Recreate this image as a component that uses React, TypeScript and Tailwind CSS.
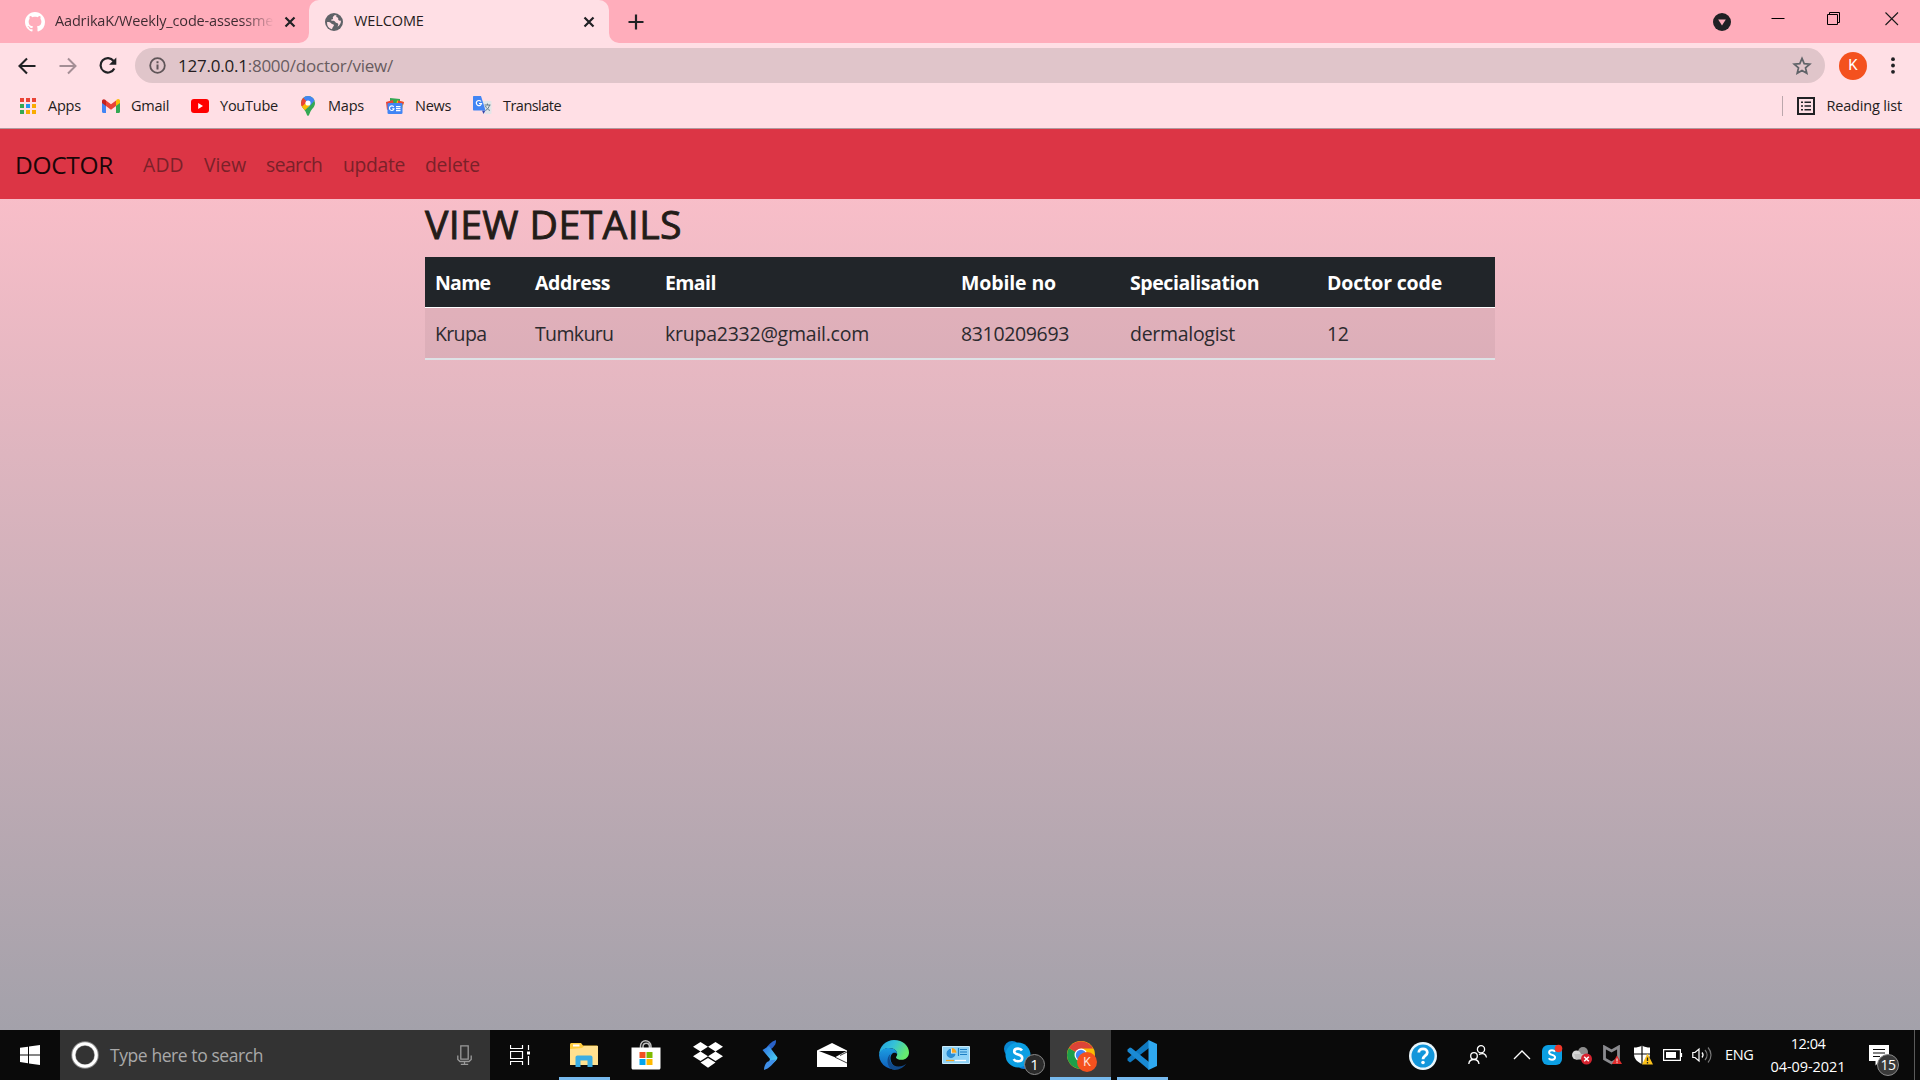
import type { ReactNode } from "react";

type IconProps = { w: number; h: number; className?: string; children: ReactNode };

function Icon({ w, h, className = "", children }: IconProps) {
  return (
    <svg width={w} height={h} viewBox={`0 0 ${w} ${h}`} fill="none" className={`block shrink-0 ${className}`}>
      {children}
    </svg>
  );
}

const CloseX = () => (
  <Icon w={12} h={12}>
    <path d="M1.5 1.5l9 9M10.5 1.5l-9 9" stroke="#202124" strokeWidth="2.2" />
  </Icon>
);

function TabStrip() {
  return (
    <div className="flex h-[43px] bg-[#ffadbb]">
      <div className="flex w-[309px] items-center pl-[25px]">
        <svg width="20" height="20" viewBox="0 0 16 16" fill="#fff" className="shrink-0">
          <path d="M8 0C3.58 0 0 3.58 0 8c0 3.54 2.29 6.53 5.47 7.59.4.07.55-.17.55-.38 0-.19-.01-.82-.01-1.49-2.01.37-2.53-.49-2.69-.94-.09-.23-.48-.94-.82-1.13-.28-.15-.68-.52-.01-.53.63-.01 1.08.58 1.23.82.72 1.21 1.87.87 2.33.66.07-.52.28-.87.51-1.07-1.78-.2-3.64-.89-3.64-3.95 0-.87.31-1.59.82-2.15-.08-.2-.36-1.02.08-2.12 0 0 .67-.21 2.2.82.64-.18 1.32-.27 2-.27s1.36.09 2 .27c1.53-1.04 2.2-.82 2.2-.82.44 1.1.16 1.92.08 2.12.51.56.82 1.27.82 2.15 0 3.07-1.87 3.75-3.65 3.95.29.25.54.73.54 1.48 0 1.07-.01 1.93-.01 2.2 0 .21.15.46.55.38A8.01 8.01 0 0 0 16 8c0-4.42-3.58-8-8-8z" />
        </svg>
        <div className="-mt-[2px] ml-[10px] w-[219px] overflow-hidden bg-gradient-to-r from-[#3c2a30] from-85% to-[#ffadbb] bg-clip-text text-[14.5px] tracking-[-0.16px] whitespace-nowrap text-transparent">
          AadrikaK/Weekly_code-assessme
        </div>
        <div className="ml-[10px]"><CloseX /></div>
      </div>
      <div className="relative flex w-[300px] items-center rounded-t-[10px] bg-[#ffdfe5] pl-4">
        <svg width="10" height="10" viewBox="0 0 10 10" className="absolute bottom-0 -left-[10px]">
          <path d="M10 0v10H0A10 10 0 0 0 10 0z" fill="#ffdfe5" />
        </svg>
        <svg width="10" height="10" viewBox="0 0 10 10" className="absolute -right-[10px] bottom-0">
          <path d="M0 0v10h10A10 10 0 0 1 0 0z" fill="#ffdfe5" />
        </svg>
        <Icon w={18} h={18}>
          <circle cx="9" cy="9" r="9" fill="#5f6368" />
          <path d="M2 9.2c1.6-.3 3.2.2 4.3 1.2.9.8 2.4.4 2.6 1.6.2 1.2-1 1.6-1.3 2.6-.2.7-.4 1.2-.8 1.6A7.2 7.2 0 0 1 2 9.2zM9.8 1.9c-.4 1-1.5 1.2-1.9 2-.4.9.5 1.3 0 2-.4.6-1.5.2-1.7 1-.1.7.9.8 1.8.8 1.4 0 2 .7 2.5 1.6.6 1 2 .5 2.6 1.5.4.7-.1 1.7-.5 2.9A7.3 7.3 0 0 0 16 7.5c-1 .6-2 .4-2.6-.4-.5-.8.2-1.6-.5-2.3-.5-.5-1.3-.4-1.6-1-.2-.5.1-1 .3-1.4z" fill="#ffdfe5" />
        </Icon>
        <span className="-mt-[2px] ml-[11px] text-[14.5px] tracking-[-0.1px] text-[#241c20]">WELCOME</span>
        <div className="mr-[14px] ml-auto"><CloseX /></div>
      </div>
      <div className="flex items-center pl-[19px]">
        <Icon w={16} h={16}><path d="M8 .5v15M.5 8h15" stroke="#202124" strokeWidth="2.2" /></Icon>
      </div>
      <div className="ml-auto flex pt-[12px] pr-[21px]">
        <Icon w={18} h={18} className="mt-[1px]">
          <circle cx="9" cy="9" r="9" fill="#202124" />
          <path d="M5.2 6.5h7.6L9 12.4z" fill="#ffadbb" />
        </Icon>
        <Icon w={14} h={14} className="ml-10"><path d="M.5 6.5h13" stroke="#000" /></Icon>
        <Icon w={14} h={14} className="ml-[42px]"><path d="M.5 2.5h10v10H.5zM2.500 2.500v-2h10v10h-2" stroke="#000" /></Icon>
        <Icon w={14} h={14} className="ml-11"><path d="M.5.5l12.500 12.500M13 .5L.5 13" stroke="#1a1a1a" strokeWidth="1.1" /></Icon>
      </div>
    </div>
  );
}

function Toolbar() {
  return (
    <div className="flex h-[45px] items-center pl-[18px]">
      <Icon w={18} h={18}><path d="M17.5 9H2M9 1.5L1.5 9 9 16.5" stroke="#202124" strokeWidth="2.1" /></Icon>
      <Icon w={18} h={18} className="ml-[23px]"><path d="M.5 9H16M9 1.5L16.500 9 9 16.500" stroke="#a48e95" strokeWidth="2" /></Icon>
      <Icon w={18} h={18} className="ml-[22px]">
        <path d="M15.300 11.500A7.200 7.200 0 1 1 14.600 4" stroke="#202124" strokeWidth="2.2" />
        <path d="M17.3.5v7.200h-7.200z" fill="#202124" />
      </Icon>
      <div className="ml-[18px] flex h-[35px] w-[1690px] items-center rounded-full bg-[#e0c5ca] pr-[13px] pl-[14px]">
        <Icon w={17} h={17}>
          <circle cx="8.500" cy="8.500" r="7.300" stroke="#5f5558" strokeWidth="1.8" />
          <path d="M8.500 7.500v5M8.500 4.300v2" stroke="#5f5558" strokeWidth="2" />
        </Icon>
        <span className="ml-3 text-[17px] tracking-[-0.23px] text-[#685c60]"><span className="text-[#241c20]">127.0.0.1</span>:8000/doctor/view/</span>
        <svg width="20" height="20" viewBox="0 0 20 20" fill="none" className="ml-auto">
          <path d="M10 2.400l2.200 5.200 5.600.5-4.300 3.700 1.300 5.500L10 14.400l-4.800 2.900 1.300-5.500L2.200 8.100l5.600-.5z" stroke="#5f6368" strokeWidth="1.7" />
        </svg>
      </div>
      <div className="ml-[14px] flex size-7 items-center justify-center rounded-full bg-[#f4511e] font-[Roboto] text-[15px] text-white">K</div>
      <Icon w={4} h={17} className="ml-[24px]">
        <circle cx="2" cy="2.2" r="1.9" fill="#202124" />
        <circle cx="2" cy="8.5" r="1.9" fill="#202124" />
        <circle cx="2" cy="14.8" r="1.9" fill="#202124" />
      </Icon>
    </div>
  );
}

const appDots = ["#ea4335", "#ea4335", "#ea4335", "#34a853", "#2196f3", "#f9ab00", "#34a853", "#f9ab00", "#f9ab00"];

function Bookmarks() {
  return (
    <div className="flex h-[40px] items-center pb-[5px] pl-5 text-[14.5px] tracking-[-0.23px] whitespace-nowrap text-[#241c20]">
      <div className="flex w-[82px] items-center gap-3">
        <Icon w={16} h={16}>
          {appDots.map((c, i) => <rect key={i} x={(i % 3) * 6} y={Math.floor(i / 3) * 6} width="4" height="4" fill={c} />)}
        </Icon>
        <span>Apps</span>
      </div>
      <div className="flex w-[89px] items-center gap-[11px]">
        <Icon w={18} h={14}>
          <path d="M0 2v10.800C0 13.500.5 14 1.200 14H4V6z" fill="#4285f4" />
          <path d="M18 2v10.800c0 .7-.5 1.200-1.200 1.200H14V6z" fill="#34a853" />
          <path d="M14 1.500V7l4-3V2c0-1.800-2-2.500-3.200-1.400z" fill="#fbbc04" />
          <path d="M4 7V1.500l5 3.700 5-3.700V7l-5 3.700z" fill="#ea4335" />
          <path d="M0 2v2l4 3V1.500L3.200.7C2-.4 0 .3 0 2z" fill="#c5221f" />
        </Icon>
        <span>Gmail</span>
      </div>
      <div className="flex w-[110px] items-center gap-[11px]">
        <Icon w={18} h={14}>
          <rect width="18" height="14" rx="3" fill="#f00" />
          <path d="M7.200 4v6l4.800-3z" fill="#fff" />
        </Icon>
        <span>YouTube</span>
      </div>
      <div className="flex w-[85px] items-center gap-[13px]">
        <svg width="14" height="20" viewBox="0 0 14 20" className="shrink-0">
          <defs><clipPath id="pin"><path d="M7 0a7 7 0 0 1 7 7c0 4-3 5.500-4.500 8.500C8.500 17.500 8 20 7 20s-1.500-2.500-2.500-4.500C3 12.500 0 11 0 7a7 7 0 0 1 7-7z" /></clipPath></defs>
          <g clipPath="url(#pin)">
            <path d="M0 0h14v20H0z" fill="#34a853" />
            <path d="M2 0h12v4L7 12 4 5z" fill="#4285f4" />
            <path d="M0 12V8l4-4 5 5.500L3 15z" fill="#fbbc04" />
            <path d="M0 2l2-.5L6 6l-5 4.500-2-1z" fill="#ea4335" />
          </g>
          <circle cx="7" cy="7" r="2.6" fill="#fff" />
        </svg>
        <span>Maps</span>
      </div>
      <div className="flex w-[87px] items-center gap-[11px]">
        <Icon w={18} h={16}>
          <path d="M4 0l10 1v6H4z" fill="#34a853" />
          <path d="M0 4l7-2 1 6-7 4z" fill="#ea4335" />
          <path d="M11 2.500l7 1.500-2 7-6-3z" fill="#fbbc04" />
          <path d="M12 2.500l6 1.500-1 3-5-2z" fill="#ea4335" />
          <rect x="1.500" y="5" width="15" height="11" rx="1.3" fill="#4285f4" />
          <path d="M7.800 9A2.300 2.300 0 1 0 8 10.800H6.200M10 8.600h4.500M10 10.600h4.500M10 12.600h4.500" stroke="#fff" strokeWidth="1.1" />
        </Icon>
        <span>News</span>
      </div>
      <div className="flex items-center gap-[11px]">
        <Icon w={19} h={19}>
          <path d="M8 5h9.500c.6 0 1 .4 1 1v11c0 .6-.4 1-1 1H12z" fill="#e3e5e8" />
          <path d="M11.500 9h6M14.400 7.500V9M16.500 9c-.5 2.500-2 4.500-4 5.500M12.500 10c.8 2 2.200 3.500 4.500 4.500" stroke="#607d8b" />
          <path d="M9 14.500h3.500L10.500 18z" fill="#3949ab" />
          <path d="M1 0h7l4.500 14.500H1c-.6 0-1-.4-1-1V1c0-.6.4-1 1-1z" fill="#4285f4" />
          <path d="M8 5.500A2.600 2.600 0 1 0 8.500 7.500H6" stroke="#fff" strokeWidth="1.2" />
        </Icon>
        <span className="tracking-[-0.53px]">Translate</span>
      </div>
      <div className="ml-auto flex items-center pr-[18px]">
        <div className="h-5 w-px bg-[#bba7ac]" />
        <Icon w={18} h={18} className="ml-[14px]">
          <rect x="1" y="1" width="16" height="16" stroke="#202124" strokeWidth="2" />
          <path d="M4 5.200h2M4 9h2M4 12.800h2M7.500 5.200H14M7.500 9H14M7.500 12.800H14" stroke="#202124" strokeWidth="1.6" />
        </Icon>
        <span className="ml-[11px] tracking-[-0.17px]">Reading list</span>
      </div>
    </div>
  );
}

const navLinks = [
  { label: "ADD", cls: "w-[61px] tracking-[0.2px]" },
  { label: "View", cls: "w-[62px]" },
  { label: "search", cls: "w-[77px] tracking-[-0.55px]" },
  { label: "update", cls: "w-[82px] tracking-[-0.3px]" },
  { label: "delete", cls: "w-[75px] tracking-[-0.2px]" },
];

const columns = [
  { head: "Name", value: "Krupa", headCls: "tracking-[-0.75px]", cls: "tracking-[-0.65px]" },
  { head: "Address", value: "Tumkuru", headCls: "tracking-[-0.42px]", cls: "tracking-[-0.65px]" },
  { head: "Email", value: "krupa2332@gmail.com", headCls: "tracking-[-0.6px]", cls: "tracking-[-0.24px]" },
  { head: "Mobile no", value: "8310209693", headCls: "tracking-[-0.13px]", cls: "tracking-[-0.35px]" },
  { head: "Specialisation", value: "dermalogist", headCls: "tracking-[-0.43px]", cls: "tracking-[-0.29px]" },
  { head: "Doctor code", value: "12", headCls: "tracking-[-0.18px]", cls: "tracking-[-0.4px]" },
];

function Page() {
  return (
    <main className="h-[901px] bg-linear-to-b from-[#ffc0cb] to-[#a3a1aa]">
      <nav className="flex h-[70px] items-center bg-[#dc3545] pt-[2px] pl-[15px]">
        <span className="w-[118px] text-[24.5px] tracking-[-0.3px] text-[#1a0608]">DOCTOR</span>
        <div className="flex">
          {navLinks.map(({ label, cls }) => (
            <a key={label} className={`pl-[10px] text-[19.3px] whitespace-nowrap text-[#7a2129] ${cls}`}>{label}</a>
          ))}
        </div>
      </nav>
      <section className="mx-auto w-[1070px]">
        <h2 className="h-[58px] text-[39.2px] leading-[50px] tracking-[0.42px] text-[#231c18] [-webkit-text-stroke:0.9px_#231c18]">VIEW DETAILS</h2>
        <table className="w-full table-fixed border-separate border-spacing-0 text-left text-[19.5px] whitespace-nowrap text-[#2c2a2e]">
          <colgroup>
            <col className="w-[100px]" /><col className="w-[130px]" /><col className="w-[296px]" />
            <col className="w-[169px]" /><col className="w-[197px]" /><col className="w-[178px]" />
          </colgroup>
          <thead>
            <tr className="bg-[#212529] text-white">
              {columns.map(({ head, headCls }) => (
                <th key={head} className={`h-[51px] border-b border-white px-[10px] pt-[2px] pb-0 font-bold ${headCls}`}>{head}</th>
              ))}
            </tr>
          </thead>
          <tbody>
            <tr className="bg-black/5">
              {columns.map(({ value, cls }) => (
                <td key={value} className={`h-[52px] border-b-2 border-[#dee2e6] px-[10px] pt-[2px] pb-0 ${cls}`}>{value}</td>
              ))}
            </tr>
          </tbody>
        </table>
      </section>
    </main>
  );
}

function TaskCell({ running, children }: { running?: boolean; children: ReactNode }) {
  return (
    <div className="relative flex h-[50px] w-[62px] items-center justify-center">
      {children}
      {running && <div className="absolute right-[5px] bottom-0 left-[6px] h-[3px] bg-[#76b9ed]" />}
    </div>
  );
}

function Taskbar() {
  return (
    <footer className="flex h-[50px] items-center bg-[#0a0a0a] text-white">
      <div className="flex w-[60px] justify-center">
        <Icon w={20} h={20}><path d="M0 2.800L8 1.700V9.400H0zM9 1.500L20 0v9.400H9zM0 10.400h8v7.800l-8-1.100zM9 10.400h11V20L9 18.400z" fill="#fff" /></Icon>
      </div>
      <div className="flex h-[50px] w-[430px] items-center bg-[#333] pl-[11px]">
        <Icon w={28} h={28}><circle cx="14" cy="14" r="11.5" stroke="#8a8a8a" strokeWidth="4.5" /><circle cx="14" cy="14" r="11.3" stroke="#fff" strokeWidth="3" /></Icon>
        <span className="ml-[11px] text-[17.5px] tracking-[-0.42px] text-[#a9a9a9]">Type here to search</span>
        <Icon w={16} h={20} className="mr-[17px] ml-auto">
          <path d="M3.800.8h7.400v13.400H3.800zM.8 10.500v4l2.200 2h9l2.200-2v-4M7.500 16.500V19M3.800 19.300h7.400" stroke="#9a9a9a" strokeWidth="1.3" />
        </Icon>
      </div>
      <div className="flex w-[63px] pl-5">
        <Icon w={22} h={20}>
          <path d="M.5 0v3.500h12V0M.5 6.500h12v7H.5zM.5 20v-3.500h12V20M18.500 0v5M18.500 11v9" stroke="#fff" strokeWidth="1.2" />
          <path d="M17 6.500h3v3h-3z" fill="#fff" />
        </Icon>
      </div>
      <TaskCell running>
        <Icon w={28} h={24}>
          <path d="M0 1.500C0 .7.7 0 1.500 0H11l2 2.500h13.500c.8 0 1.500.5 1.500 1.300V22H0z" fill="#ffcc3d" />
          <path d="M3 1.500h6.500v2H3z" fill="#fff" />
          <path d="M0 6l12-1 2-2h14v19H0z" fill="#ffe08f" />
          <path d="M5.500 14.500c0-1.200.8-2 2-2h13c1.200 0 2 .8 2 2V24h-5v-6.500h-7V24h-5z" fill="#3aade4" />
        </Icon>
      </TaskCell>
      <TaskCell>
        <Icon w={30} h={30} className="-ml-[1px]">
          <path d="M9.500 8V6c0-3 2.300-5.200 5-5.200S20 3 20 6v2M12 8V6.500c0-2 1.300-3.300 3.200-3.300s3.200 1.500 3.200 3.300V8" stroke="#bdbdbd" strokeWidth="1.5" />
          <path d="M.5 7.500h29V28c0 .8-.7 1.500-1.500 1.500H2c-.8 0-1.500-.7-1.500-1.500z" fill="#fff" />
          <path d="M8.500 12h6v6h-6z" fill="#f25022" /><path d="M15.500 12h6v6h-6z" fill="#7fba00" />
          <path d="M8.500 19h6v6h-6z" fill="#00a4ef" /><path d="M15.500 19h6v6h-6z" fill="#ffb900" />
        </Icon>
      </TaskCell>
      <TaskCell>
        <Icon w={30} h={26}><path d="M7.500 0L0 4.700l7.500 4.700L15 4.700zM22.500 0L15 4.700l7.500 4.700L30 4.700zM0 14.200l7.500 4.700 7.500-4.700-7.500-4.800zM22.500 9.400L15 14.200l7.500 4.700 7.500-4.700zM7.500 20.600L15 25.800l7.500-5.200L15 16z" fill="#fff" /></Icon>
      </TaskCell>
      <TaskCell>
        <Icon w={16} h={30}>
          <defs><linearGradient id="bolt" x1="0" y1="0" x2="1" y2="1"><stop stopColor="#2f6fe0" /><stop offset="1" stopColor="#4fe0f5" /></linearGradient></defs>
          <path d="M14 0c.3 3-1 5.500-3.500 8L6 11 3.500 9.500C6 5 9 1.500 14 0z" fill="#2a62c8" />
          <path d="M.5 10L7 6l8.500 11.500c0 2-2.500 4.500-6 6.500L7 22l1-3z" fill="url(#bolt)" />
          <path d="M2 30c0-3 1-6 3-8l4.500-2 4.500-.5C11 24.500 7 28.500 2 30z" fill="#3f8fe8" />
        </Icon>
      </TaskCell>
      <TaskCell>
        <Icon w={30} h={24}>
          <path d="M0 7.500L15 0l15 7.500V24H0z" fill="#fff" />
          <path d="M2 8h27.500L18 14.200z" fill="#0a0a0a" />
          <path d="M18 14.200L30 20M30 9l-7 3.500" stroke="#0a0a0a" strokeWidth=".8" />
        </Icon>
      </TaskCell>
      <TaskCell>
        <Icon w={30} h={30}>
          <defs>
            <linearGradient id="e1" x1="0" y1="0" x2="1" y2=".4"><stop stopColor="#1f9fe0" /><stop offset=".5" stopColor="#35c1d8" /><stop offset="1" stopColor="#66eb6e" /></linearGradient>
            <linearGradient id="e2" x1="0" y1="0" x2="0" y2="1"><stop stopColor="#1b9de2" /><stop offset="1" stopColor="#0f5dba" /></linearGradient>
          </defs>
          <path d="M0 15C.3 6.500 6.800 0 15 0c9 0 15 6 15 12.500 0 4.500-3.400 7.300-7.300 7.300-3.700 0-5.700-1.500-5.700-2.400 0-.7 1.200-1.400 1.200-3.400 0-3-3.300-6-8-6C5.500 8 1.500 11 0 15z" fill="url(#e1)" />
          <path d="M0 15C1 10.500 5 8 10 8c5 0 8.200 3 8.200 6-2-2.500-6.700-1.500-6.700 4.500 0 5 4.500 9.500 9.500 9.500A15 15 0 0 1 0 15z" fill="url(#e2)" />
          <path d="M11.500 14c-3 6 1.500 12.500 8 12.500 4 0 6.500-1.800 8-3A15 15 0 0 1 15.500 30C10 29.500 8.500 24 8.500 21s1-5.500 3-7z" fill="#114a8b" />
        </Icon>
      </TaskCell>
      <TaskCell>
        <Icon w={28} h={18}>
          <path d="M.5.5h27v17H.5z" fill="#8fd3f7" stroke="#c9ebfb" />
          <circle cx="9" cy="7.500" r="4.7" fill="#e8f5fc" /><path d="M9 7.500V2.800a4.700 4.700 0 1 0 4.700 4.700z" fill="#2b8fd6" /><path d="M9.800 6.700V2a4.700 4.700 0 0 1 4.700 4.700z" fill="#f6a623" />
          <path d="M18 3.500h7M18 6h7M18 8.500h7M16.500 2v8" stroke="#1c7fc4" strokeWidth="1.2" />
          <path d="M4 14.500h8" stroke="#f6a623" strokeWidth="1.3" /><path d="M13 14.500h11" stroke="#fff" strokeWidth="1.3" />
        </Icon>
      </TaskCell>
      <TaskCell>
        <Icon w={28} h={28}>
          <circle cx="8" cy="8" r="8" fill="#0a86d0" /><circle cx="20" cy="20" r="8" fill="#0a78d4" /><circle cx="14" cy="14" r="12.5" fill="#0c9fe3" />
          <path d="M18 9.500c-.8-1.300-2.200-1.900-4-1.900-2.300 0-3.800 1.100-3.800 2.900 0 4 8 2.200 8 6.400 0 2-1.700 3.300-4.200 3.300-2 0-3.500-.7-4.400-2.100" stroke="#fff" strokeWidth="2.6" />
        </Icon>
        <div className="absolute top-6 left-[37px] flex size-[21px] items-center justify-center rounded-full border border-[#8a8a8a] bg-[#2b2b2b] text-[15px] leading-none">1</div>
      </TaskCell>
      <div className="relative ml-px flex h-[50px] w-[61px] items-center justify-center border-b-3 border-[#76b9ed] bg-[#3c3c3c] pt-[3px]">
        <Icon w={28} h={28}>
          <circle cx="14" cy="14" r="14" fill="#fbbc04" />
          <path d="M14 14L1.900 7A14 14 0 0 0 14 28l6-10.500z" fill="#1e9e4a" />
          <path d="M14 14L1.900 7A14 14 0 0 1 26.100 7.500H14z" fill="#dc4437" />
          <circle cx="14" cy="14" r="6.5" fill="#fff" /><circle cx="14" cy="14" r="5.2" fill="#4285f4" />
        </Icon>
        <div className="absolute top-[22px] left-[27px] flex size-5 items-center justify-center rounded-full bg-[#f4511e] font-[Roboto] text-[12px] text-[#ffe0d5]">K</div>
      </div>
      <TaskCell running>
        <Icon w={30} h={30}>
          <path d="M22 0v8L4.500 21.500 3 22.500.5 20.500v-2z" fill="#0f79c0" />
          <path d="M.5 9.500L3 7.500l1.500.5L22 22v8L.5 11.500z" fill="#1a8ad4" />
          <path d="M21.500 0L30 4v22l-8.500 4z" fill="#2fa8f0" />
        </Icon>
      </TaskCell>

      <div className="ml-auto flex items-center">
        <Icon w={28} h={28} className="mt-[2px]">
          <circle cx="14" cy="14" r="14" fill="#e9f6fc" /><circle cx="14" cy="14" r="11.5" fill="#1296db" />
          <path d="M9.800 10.500c0-2.300 1.800-3.700 4.200-3.700s4.300 1.400 4.300 3.700c0 3-4.300 3.200-4.300 6.700" stroke="#fff" strokeWidth="2.8" /><circle cx="14" cy="20.500" r="1.8" fill="#fff" />
        </Icon>
        <Icon w={20} h={20} className="ml-[31px]">
          <circle cx="13" cy="4.300" r="3.6" stroke="#fff" strokeWidth="1.3" /><path d="M11 9.500c4-2 7-.5 7.500 3" stroke="#fff" strokeWidth="1.3" />
          <circle cx="6" cy="11" r="3.3" stroke="#fff" strokeWidth="1.3" /><path d="M.8 19c.5-6 9.500-6 10.200 0" stroke="#fff" strokeWidth="1.3" />
        </Icon>
        <Icon w={18} h={10} className="ml-[25px]"><path d="M1 9l8-8 8 8" stroke="#fff" strokeWidth="1.3" /></Icon>
        <Icon w={22} h={22} className="ml-[10px]">
          <rect x="1" y="1" width="20" height="20" rx="6" fill="#0c9fe3" />
          <path d="M14 7.700c-.6-1-1.700-1.400-3-1.400-1.800 0-2.900.8-2.900 2.200 0 3 6 1.700 6 4.800 0 1.500-1.200 2.400-3.100 2.400-1.500 0-2.700-.5-3.300-1.500" stroke="#fff" strokeWidth="1.9" />
          <circle cx="17.500" cy="4.500" r="3.8" fill="#f0382b" />
        </Icon>
        <Icon w={22} h={20} className="ml-2">
          <circle cx="12" cy="7" r="5" fill="#8d8d8d" /><circle cx="5.500" cy="10" r="4.5" fill="#d6d6d6" /><path d="M3 9h15v5.500H5z" fill="#c2c2c2" />
          <circle cx="15.500" cy="14" r="5.5" fill="#d5232f" /><path d="M13.200 11.700l4.600 4.600M17.800 11.700l-4.600 4.600" stroke="#fff" strokeWidth="1.5" />
        </Icon>
        <Icon w={20} h={20} className="ml-[9px]">
          <path d="M2.500 2l7 4 7-4v12l-7 4-7-4z" stroke="#8a8a8e" strokeWidth="2.8" />
          <path d="M15 10.500l5 8.500H10z" fill="#e02b2b" /><path d="M15 13.500v3M15 17.200v1" stroke="#fff" />
        </Icon>
        <Icon w={20} h={20} className="ml-[11px]">
          <path d="M9 .5c2.500 1.500 5 2 8 2V9c0 5-3.500 8-8 10C4.500 17 1 14 1 9V2.500c3 0 5.500-.5 8-2z" fill="#fff" />
          <path d="M9 0v19M1 9h16" stroke="#0a0a0a" strokeWidth="1.2" />
          <path d="M14.500 8.500L20 19.500H9z" fill="#fcc21b" /><path d="M14.500 12.500v3.500M14.500 17v1.500" stroke="#222" strokeWidth="1.3" />
        </Icon>
        <Icon w={20} h={12} className="ml-[10px]"><path d="M.6.6h16.800v10.800H.6zM18.500 4v4" stroke="#fff" strokeWidth="1.2" /><path d="M3 3h10v6H3z" fill="#fff" /></Icon>
        <Icon w={22} h={18} className="ml-[9px]">
          <path d="M.8 6.500H3L7 3v12l-4-3.500H.8z" stroke="#fff" strokeWidth="1.2" /><path d="M10 6.500c1.300 1.500 1.300 3.500 0 5" stroke="#fff" strokeWidth="1.2" />
          <path d="M13 4c2.700 3 2.700 7 0 10M16 1.500c4 4.500 4 10.500 0 15" stroke="#777" strokeWidth="1.2" />
        </Icon>
        <div className="ml-[11px] w-[45px] text-[14.5px] tracking-[-0.4px]">ENG</div>
        <div className="flex w-[76px] flex-col items-center text-[14.5px] leading-[23px]">
          <span className="-mt-[1px] tracking-[-0.5px]">12:04</span>
          <span className="tracking-[-0.07px]">04-09-2021</span>
        </div>
        <div className="relative ml-[23px] w-[45px]">
          <Icon w={20} h={21}>
            <path d="M0 0h20v16h-9l-4.500 4.500V16H0z" fill="#fff" /><path d="M4 4.500h12M4 8h12M4 11.500h7" stroke="#0a0a0a" strokeWidth="1.2" />
          </Icon>
          <div className="absolute top-[9px] left-2 flex size-[22px] items-center justify-center rounded-full border border-[#8a8a8a] bg-[#3a3a3a] text-[14px] leading-none tracking-[-0.5px]">15</div>
        </div>
        <div className="mr-[5px] h-[50px] w-px bg-[#5a5a5a]" />
      </div>
    </footer>
  );
}

export default function App() {
  return (
    <div className="h-[1080px] w-[1920px] overflow-hidden font-['Open_Sans','Noto_Sans',sans-serif]">
      <header className="h-[129px] border-b border-[#b2999e] bg-[#ffdfe5]">
        <TabStrip />
        <Toolbar />
        <Bookmarks />
      </header>
      <Page />
      <Taskbar />
    </div>
  );
}
